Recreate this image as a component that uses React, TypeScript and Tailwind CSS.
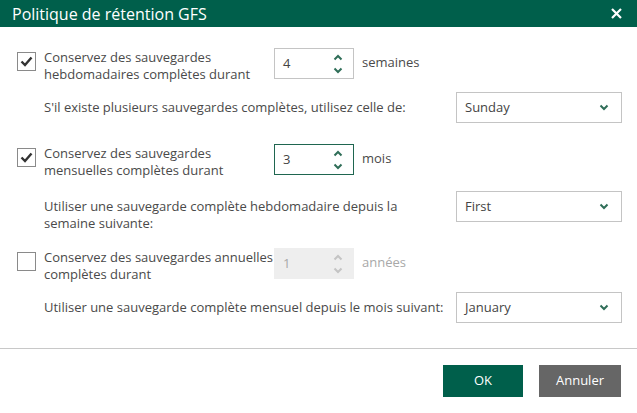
import React from "react";

const font = { fontFamily: '"Open Sans", "Liberation Sans", sans-serif' };

function Check({ checked }: { checked: boolean }) {
    return (
        <div className="mt-[4px] flex h-[19px] w-[19px] shrink-0 items-center justify-center border border-[#8a8a8a] bg-white">
            {checked && (
                <svg width="13" height="11" viewBox="0 0 13 11">
                    <path d="M1.5 5.5 L5 9 L11.5 1.5" fill="none" stroke="#333" strokeWidth="2.4" />
                </svg>
            )}
        </div>
    );
}

function Chevron({ up, color }: { up?: boolean; color: string }) {
    return (
        <svg width="10" height="7" viewBox="0 0 10 7">
            <path d={up ? "M1.5 5.5 L5 2 L8.5 5.5" : "M1.5 1.5 L5 5 L8.5 1.5"} fill="none" stroke={color} strokeWidth="2" />
        </svg>
    );
}

function Spinner({ value, focused, disabled }: { value: string; focused?: boolean; disabled?: boolean }) {
    const border = disabled ? "border-transparent bg-[#eeeeee] text-[#a8a8a8]" : focused ? "border-[#1f6650] bg-white text-[#444]" : "border-[#c4c4c4] bg-white text-[#444]";
    const chev = disabled ? "#c4c4c4" : "#2f6e58";
    return (
        <div className={`flex h-[31px] w-[80px] shrink-0 items-center border ${border}`}>
            <span className="flex-1 pl-[8px] text-[13px]">{value}</span>
            <div className="mr-[10px] flex flex-col items-center gap-[6px]">
                <Chevron up color={chev} />
                <Chevron color={chev} />
            </div>
        </div>
    );
}

function Select({ value }: { value: string }) {
    return (
        <div className="flex h-[31px] w-[166px] shrink-0 items-center justify-between border border-[#c4c4c4] bg-white pl-[8px] pr-[12px] text-[13px] text-[#444]">
            <span>{value}</span>
            <Chevron color="#2f6e58" />
        </div>
    );
}

function Section({
    checked,
    label,
    value,
    unit,
    focused,
    subLabel,
    selectValue,
    subTop,
}: {
    checked: boolean;
    label: React.ReactNode;
    value: string;
    unit: string;
    focused?: boolean;
    subLabel: React.ReactNode;
    selectValue: string;
    subTop: string;
}) {
    const disabled = !checked;
    return (
        <div className="flex flex-col">
            <div className="flex h-[31px] items-start pl-[17px]">
                <Check checked={checked} />
                <div className="ml-[8px] w-[230px] pt-[1px] text-[13px] leading-[17px] text-[#4a4a4a]">{label}</div>
                <Spinner value={value} focused={focused} disabled={disabled} />
                <span className={`ml-[8px] pt-[5px] text-[13px] ${disabled ? "text-[#a8a8a8]" : "text-[#4a4a4a]"}`}>{unit}</span>
            </div>
            <div className={`flex items-start pl-[44px] pr-[15px] ${subTop}`}>
                <div className="flex-1 pt-[7px] text-[13px] leading-[17px] text-[#4a4a4a]">{subLabel}</div>
                <Select value={selectValue} />
            </div>
        </div>
    );
}

export default function App() {
    return (
        <div className="h-[413px] w-[637px] overflow-hidden bg-white" style={font}>
            <div className="flex h-[27px] items-center justify-between bg-[#005f4b] pl-[12px] pr-[15px]">
                <span className="text-[16px] text-white">Politique de rétention GFS</span>
                <svg width="11" height="11" viewBox="0 0 11 11">
                    <path d="M1 1 L10 10 M10 1 L1 10" stroke="white" strokeWidth="2.2" />
                </svg>
            </div>

            <div className="flex flex-col pt-[21px]">
                <Section
                    checked
                    label={<>Conservez des sauvegardes<br />hebdomadaires complètes durant</>}
                    value="4"
                    unit="semaines"
                    subLabel="S'il existe plusieurs sauvegardes complètes, utilisez celle de:"
                    selectValue="Sunday"
                    subTop="mt-[13px]"
                />
                <div className="h-[21px]" />
                <Section
                    checked
                    focused
                    label={<>Conservez des sauvegardes<br />mensuelles complètes durant</>}
                    value="3"
                    unit="mois"
                    subLabel={<>Utiliser une sauvegarde complète hebdomadaire depuis la<br />semaine suivante:</>}
                    selectValue="First"
                    subTop="mt-[16px]"
                />
                <div className="h-[16px]" />
                <Section
                    checked={false}
                    label={<>Conservez des sauvegardes annuelles<br />complètes durant</>}
                    value="1"
                    unit="années"
                    subLabel="Utiliser une sauvegarde complète mensuel depuis le mois suivant:"
                    selectValue="January"
                    subTop="mt-[13px]"
                />
            </div>

            <div className="mt-[25px] border-t border-[#c8c8c8]" />
            <div className="flex justify-end gap-[16px] pr-[16px] pt-[16px]">
                <button className="h-[32px] w-[80px] bg-[#005f4b] text-[13px] text-white">OK</button>
                <button className="h-[32px] w-[82px] bg-[#666666] text-[13px] text-white">Annuler</button>
            </div>
        </div>
    );
}
